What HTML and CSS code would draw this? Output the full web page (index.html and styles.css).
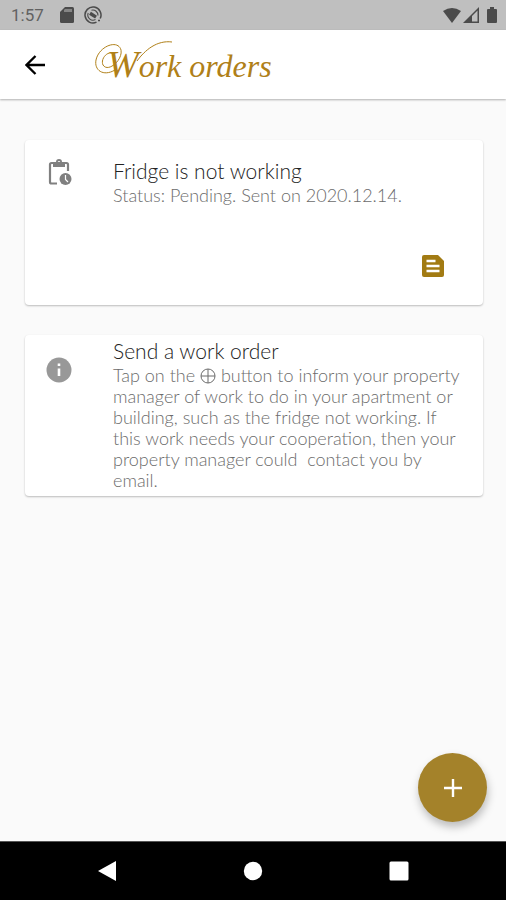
FILE: index.html
```html
<!DOCTYPE html>
<html lang="en">
<head>
<meta charset="utf-8">
<meta name="viewport" content="width=device-width, initial-scale=1">
<title>Work orders</title>
<link rel="stylesheet" href="styles.css">
</head>
<body>
<div class="status">
  <span class="clock">1:57</span>
  <svg class="sd" viewBox="0 0 14 16" width="14" height="16"><path fill="currentColor" fill-rule="evenodd" d="M5 0h7.500Q14 0 14 1.500v13Q14 16 12.500 16h-11Q0 16 0 14.500V5Z"/><path fill="#858585" d="M5 2h7v3H4V3Z"/></svg>
  <svg viewBox="0 0 18 18" width="18" height="18" fill="none" stroke="currentColor"><path stroke-width="1.500" d="M12.500 16.200A8 8 0 1 1 16.200 12.500M14 14.500h2"/><path stroke-width="1.100" d="M11.500 13.500A5.200 5.200 0 0 1 4.200 7M7.500 4.200A5.200 5.200 0 0 1 14 9.500"/><path stroke-width="3.400" d="m6 7.300 6 3.800"/></svg>
  <span class="spacer"></span>
  <svg viewBox="0 0 18 15" width="18" height="15"><path fill="currentColor" d="M0 3Q9-3 18 3L9 15Z"/></svg>
  <svg class="signal" viewBox="0 0 16 16" width="16" height="16"><path fill="currentColor" fill-rule="evenodd" d="M16 0v16H0ZM14.500 3.500 9 9v5.500h5.500Z"/></svg>
  <svg class="battery" viewBox="0 0 10 16" width="10" height="16"><path fill="currentColor" d="M3 0h4v2h2q1 0 1 1v12q0 1-1 1H1q-1 0-1-1V3q0-1 1-1h2Z"/></svg>
</div>
<header class="bar">
  <button class="back" aria-label="Back"><svg viewBox="0 0 20 20" width="20" height="20" fill="none" stroke="currentColor" stroke-width="2.300"><path d="M20 10H2M10.500 1 1.500 10l9 9"/></svg></button>
  <h1 class="title">Work orders<svg class="swash" viewBox="0 0 80 42" width="80" height="42" fill="none" stroke="currentColor" aria-hidden="true"><path stroke-width="1" d="M20 30C8 37-1 30 1 20C4 6 23-1 26 10C28 20 13 33 8 25C5 18 14 10 18 14M42 21C50 10 62 0 77 2"/></svg></h1>
</header>
<main class="content">
  <article class="card order">
    <svg class="icon" viewBox="0 0 24 26" width="24" height="26"><path fill="none" stroke="currentColor" stroke-width="2.200" d="M9 24.500H3.500Q2 24.500 2 23V5.500Q2 4 3.500 4h15Q20 4 20 5.500V12"/><path fill="currentColor" fill-rule="evenodd" d="M5 3h3a3 3 0 0 1 6 0h3v5H5ZM11 2a1.200 1.200 0 1 0 .01 0Z"/><circle cx="17.500" cy="20" r="6" fill="currentColor"/><path fill="none" stroke="#fff" stroke-width="1.200" d="M17.500 16v4.500l2.500 2.500"/></svg>
    <div class="text">
      <h2 class="heading">Fridge is not working</h2>
      <p class="detail">Status: Pending. Sent on 2020.12.14.</p>
    </div>
    <button class="note" aria-label="Open work order"><svg viewBox="0 0 22 22" width="22" height="22"><path fill="currentColor" d="M2 0h14l6 6v14q0 2-2 2H2q-2 0-2-2V2Q0 0 2 0Z"/><path stroke="#fff" stroke-width="2.400" d="M4.500 6h9M4.500 11h13M4.500 16h13"/></svg></button>
  </article>
  <article class="card info">
    <svg class="icon" viewBox="0 0 26 26" width="26" height="26"><circle cx="13" cy="13" r="12.500" fill="#989898"/><path fill="#fff" d="M11.700 6.500h2.600V9h-2.600ZM11.700 11.500h2.600V19h-2.600Z"/></svg>
    <div class="text">
      <h2 class="heading">Send a work order</h2>
      <p class="detail">Tap on the <svg class="inline" viewBox="0 0 16 16" width="16" height="16" role="img" aria-label="plus" fill="none" stroke="currentColor"><circle cx="8" cy="8" r="7"/><path d="M8 1v14M1 8h14"/></svg> button to inform your property manager of work to do in your apartment or building, such as the fridge not working. If this work needs your cooperation, then your property manager could&nbsp; contact you by email.</p>
    </div>
  </article>
</main>
<button class="fab" aria-label="Add work order"><svg viewBox="0 0 18 18" width="18" height="18"><path stroke="currentColor" stroke-width="2.400" d="M9 0v18M0 9h18"/></svg></button>
<nav class="nav">
  <button aria-label="Back"><svg viewBox="0 0 20 22" width="20" height="22"><path fill="currentColor" d="M19 1v20L1 11Z"/></svg></button>
  <button aria-label="Home"><svg viewBox="0 0 20 20" width="20" height="20"><circle cx="10" cy="10" r="9.200" fill="currentColor"/></svg></button>
  <button aria-label="Recent apps"><svg viewBox="0 0 20 20" width="20" height="20"><rect x=".5" y=".5" width="19" height="19" rx="1.500" fill="currentColor"/></svg></button>
</nav>
</body>
</html>
```
FILE: styles.css
```css
* { box-sizing: border-box; }
body {
  margin: 0;
  min-height: 100vh;
  display: flex;
  flex-direction: column;
  background: #fafafa;
  font-family: Lato, "Liberation Sans", sans-serif;
}
button {
  display: flex;
  align-items: center;
  justify-content: center;
  padding: 0;
  border: 0;
  background: none;
  cursor: pointer;
}
svg { display: block; flex: none; }
.status {
  display: flex;
  align-items: center;
  height: 30px;
  padding: 0 9px 0 11px;
  background: #bfbfbf;
  color: #4b4b4b;
}
.clock { font: 17px/20px Roboto, sans-serif; color: #626262; }
.sd { margin: 0 10px 0 16px; }
.spacer { flex: 1; }
.signal { margin-left: 2px; }
.battery { margin-left: 8px; }
.bar {
  display: flex;
  align-items: center;
  height: 69px;
  padding: 0 15px;
  background: #fff;
  box-shadow: 0 1px 2px rgba(0, 0, 0, .3);
}
.back { width: 40px; height: 40px; color: #000; }
.title {
  position: relative;
  margin: 0 0 0 52px;
  font: italic 32px/56px "Liberation Serif", serif;
  color: #b08018;
}
.title::first-letter { font-size: 38px; }
.swash { position: absolute; left: -12px; top: 4px; }
.content {
  flex: 1;
  display: flex;
  flex-direction: column;
  gap: 30px;
  padding: 41px 23px 40px 25px;
}
.card {
  display: grid;
  grid-template-columns: 65px 1fr;
  padding: 0 16px 0 23px;
  border-radius: 4px;
  background: #fff;
  box-shadow: 0 1px 2px rgba(0, 0, 0, .25);
}
.order { padding-top: 17px; padding-bottom: 19px; row-gap: 40px; }
.info { padding-top: 2px; padding-bottom: 5px; }
.icon { margin-top: 2px; color: #808080; }
.info .icon { margin-top: 20px; margin-left: -2px; }
.heading { margin: 0; font-size: 21px; line-height: 28px; font-weight: 300; color: #222; }
.detail { margin: 0; font-size: 18px; line-height: 21px; font-weight: 300; color: #6c6c6c; }
.inline { display: inline-block; vertical-align: -2px; }
.note { grid-column: 2; justify-self: end; width: 40px; height: 40px; margin-right: 14px; color: #a27b13; }
.fab {
  position: fixed;
  right: 19px;
  bottom: 78px;
  width: 69px;
  height: 69px;
  border-radius: 50%;
  background: #a4822a;
  color: #fff;
  box-shadow: 1px 5px 9px rgba(0, 0, 0, .25);
}
.nav {
  display: flex;
  justify-content: center;
  gap: 86px;
  height: 59px;
  border-top: 1px solid #555;
  background: #000;
}
.nav button { width: 60px; color: #fff; }
```
